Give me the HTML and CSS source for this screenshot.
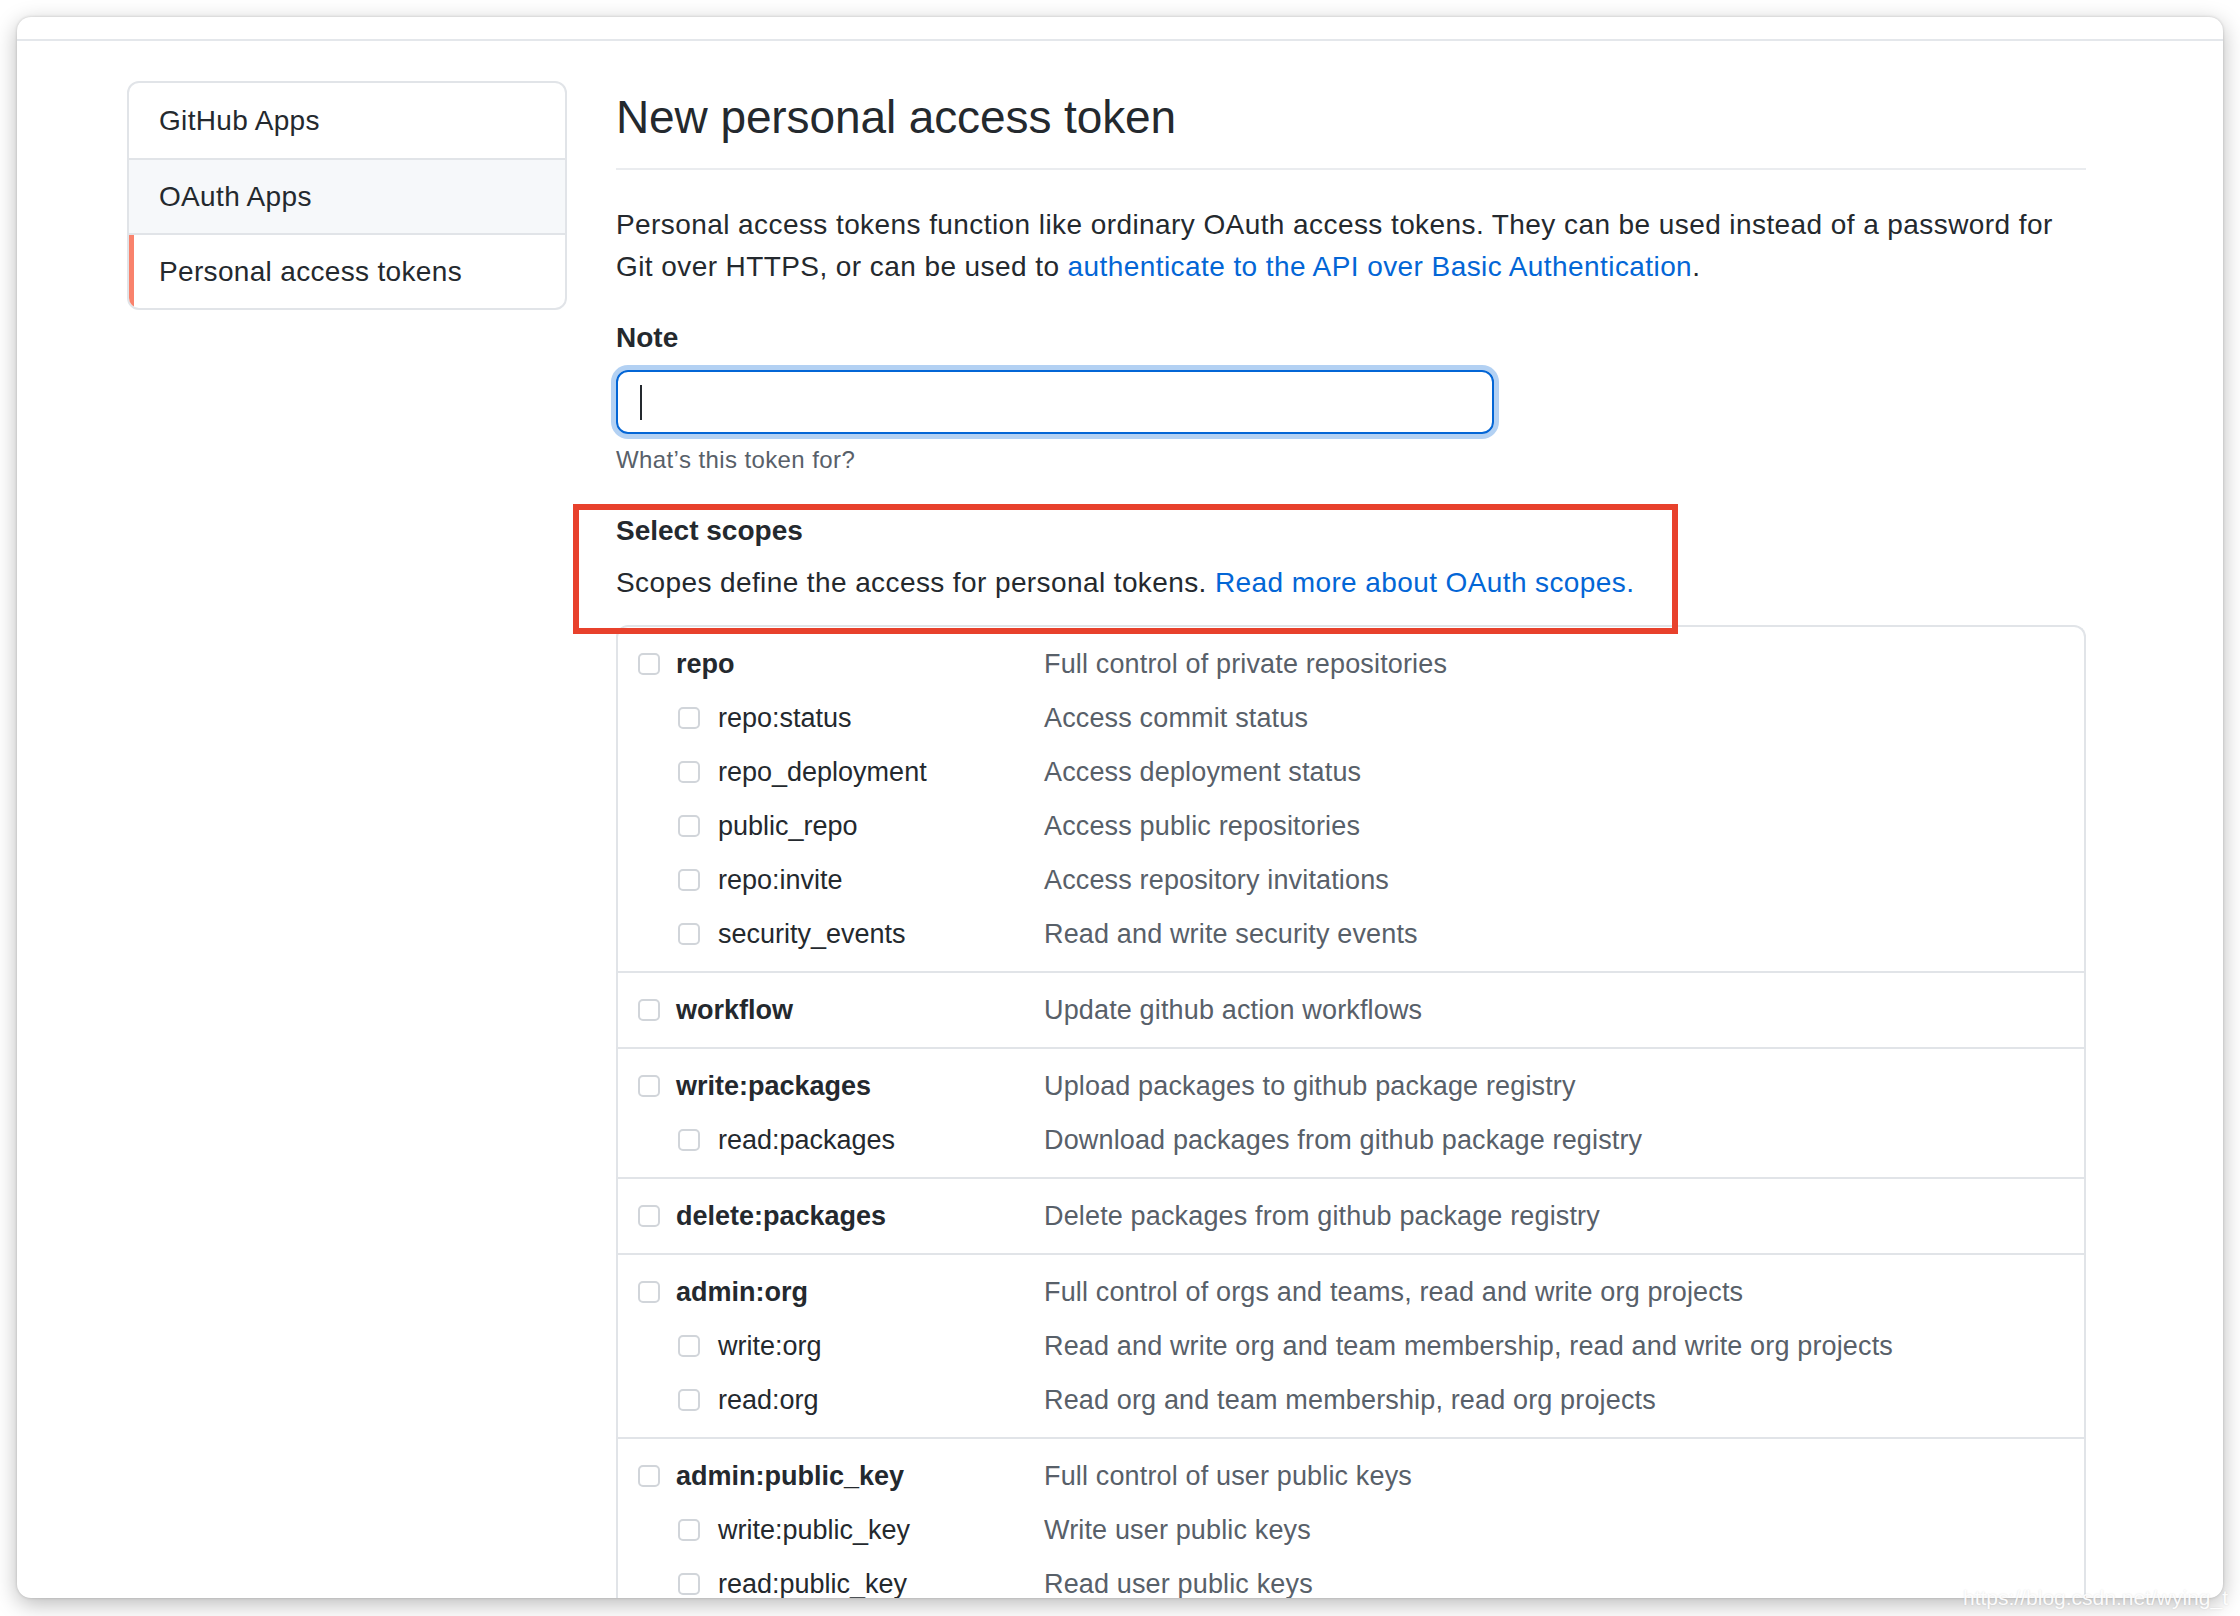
FILE: index.html
```html
<!DOCTYPE html>
<html lang="en">
<head>
<meta charset="utf-8">
<title>New personal access token</title>
<link rel="stylesheet" href="styles.css">
</head>
<body>
<div class="window">
  <div class="topbar"></div>
  <div class="layout">
    <nav class="menu">
      <a class="menu-item">GitHub Apps</a>
      <a class="menu-item hover">OAuth Apps</a>
      <a class="menu-item selected">Personal access tokens</a>
    </nav>
    <main class="main">
      <h2 class="subhead">New personal access token</h2>
      <p class="lead">Personal access tokens function like ordinary OAuth access tokens. They can be used instead of a password for Git over HTTPS, or can be used to <a class="link">authenticate to the API over Basic Authentication</a>.</p>
      <label class="label note-label">Note</label>
      <div class="input"><span class="caret"></span></div>
      <p class="hint">What’s this token for?</p>

      <div class="scopes-head">
        <h3 class="label">Select scopes</h3>
        <p class="scopes-desc">Scopes define the access for personal tokens. <a class="link">Read more about OAuth scopes.</a></p>
      </div>

      <div class="scopes">
        <div class="group">
          <div class="row"><div class="name top"><span class="cb"></span>repo</div><div class="desc">Full control of private repositories</div></div>
          <div class="row"><div class="name sub"><span class="cb"></span>repo:status</div><div class="desc">Access commit status</div></div>
          <div class="row"><div class="name sub"><span class="cb"></span>repo_deployment</div><div class="desc">Access deployment status</div></div>
          <div class="row"><div class="name sub"><span class="cb"></span>public_repo</div><div class="desc">Access public repositories</div></div>
          <div class="row"><div class="name sub"><span class="cb"></span>repo:invite</div><div class="desc">Access repository invitations</div></div>
          <div class="row"><div class="name sub"><span class="cb"></span>security_events</div><div class="desc">Read and write security events</div></div>
        </div>
        <div class="group">
          <div class="row"><div class="name top"><span class="cb"></span>workflow</div><div class="desc">Update github action workflows</div></div>
        </div>
        <div class="group">
          <div class="row"><div class="name top"><span class="cb"></span>write:packages</div><div class="desc">Upload packages to github package registry</div></div>
          <div class="row"><div class="name sub"><span class="cb"></span>read:packages</div><div class="desc">Download packages from github package registry</div></div>
        </div>
        <div class="group">
          <div class="row"><div class="name top"><span class="cb"></span>delete:packages</div><div class="desc">Delete packages from github package registry</div></div>
        </div>
        <div class="group">
          <div class="row"><div class="name top"><span class="cb"></span>admin:org</div><div class="desc">Full control of orgs and teams, read and write org projects</div></div>
          <div class="row"><div class="name sub"><span class="cb"></span>write:org</div><div class="desc">Read and write org and team membership, read and write org projects</div></div>
          <div class="row"><div class="name sub"><span class="cb"></span>read:org</div><div class="desc">Read org and team membership, read org projects</div></div>
        </div>
        <div class="group">
          <div class="row"><div class="name top"><span class="cb"></span>admin:public_key</div><div class="desc">Full control of user public keys</div></div>
          <div class="row"><div class="name sub"><span class="cb"></span>write:public_key</div><div class="desc">Write user public keys</div></div>
          <div class="row"><div class="name sub"><span class="cb"></span>read:public_key</div><div class="desc">Read user public keys</div></div>
        </div>
      </div>
    </main>
  </div>
</div>
<div class="watermark">https://blog.csdn.net/wying_t</div>
</body>
</html>
```

FILE: styles.css
```css
* { box-sizing: border-box; }

html, body {
  margin: 0;
  padding: 0;
  background: #ffffff;
}

body {
  width: 2240px;
  height: 1616px;
  overflow: hidden;
  position: relative;
  font-family: "Liberation Sans", Arial, sans-serif;
  color: #24292e;
  font-size: 28px;
}

.window {
  margin: 17px 0 0 17px;
  width: 2206px;
  height: 1581px;
  background: #fff;
  border-radius: 14px;
  overflow: hidden;
  box-shadow: 0 6px 22px rgba(0, 0, 0, 0.28), 0 0 3px rgba(0, 0, 0, 0.18);
}

.topbar {
  height: 24px;
  border-bottom: 2px solid #e4e7eb;
}

.layout {
  display: flex;
  align-items: flex-start;
  gap: 49px;
  padding: 40px 0 0 110px;
}

/* sidebar menu */
.menu {
  width: 440px;
  flex: none;
  border: 2px solid #e1e4e8;
  border-radius: 12px;
  overflow: hidden;
  display: flex;
  flex-direction: column;
}

.menu-item {
  display: flex;
  align-items: center;
  height: 75px;
  padding-left: 30px;
  color: #24292e;
  position: relative;
  line-height: 1;
  letter-spacing: 0.33px;
}

.menu-item + .menu-item {
  border-top: 2px solid #e1e4e8;
}

.menu-item.hover {
  background: #f6f8fa;
}

.menu-item.selected::before {
  content: "";
  position: absolute;
  left: 0;
  top: 0;
  bottom: 0;
  width: 5px;
  background: #f9826c;
}

/* main column */
.main {
  width: 1470px;
  flex: none;
}

.subhead {
  margin: 8px 0 0;
  font-size: 46px;
  font-weight: 400;
  line-height: 56px;
  padding-bottom: 23px;
  border-bottom: 2px solid #eaecef;
  letter-spacing: -0.1px;
}

.lead {
  margin: 34px 0 0;
  line-height: 42px;
  letter-spacing: 0.42px;
}

.link {
  color: #0366d6;
  text-decoration: none;
}

.label {
  display: block;
  margin: 32px 0 0;
  font-size: 28px;
  font-weight: 700;
  line-height: 42px;
}

.note-label {
  margin-top: 29px;
}

.input {
  margin-top: 11px;
  width: 878px;
  height: 64px;
  border: 2px solid #0366d6;
  border-radius: 12px;
  box-shadow: 0 0 0 5px rgba(3, 102, 214, 0.3);
  display: flex;
  align-items: center;
  padding-left: 22px;
}

.caret {
  width: 2px;
  height: 35px;
  background: #24292e;
}

.hint {
  margin: 8px 0 0;
  font-size: 24px;
  line-height: 36px;
  color: #586069;
  letter-spacing: 0.4px;
}

.scopes-head {
  position: relative;
}

.scopes-head::after {
  content: "";
  position: absolute;
  left: -43px;
  top: -6px;
  width: 1093px;
  height: 118px;
  border: 6px solid #e8412c;
  z-index: 3;
}

.scopes-desc {
  margin: 10px 0 0;
  line-height: 42px;
  letter-spacing: 0.4px;
}

/* scopes list */
.scopes {
  margin-top: 21px;
  border: 2px solid #e1e4e8;
  border-bottom: none;
  border-radius: 12px 12px 0 0;
  font-size: 27px;
}

.group {
  padding: 10px 0 10px;
}

.group + .group {
  border-top: 2px solid #e1e4e8;
}

.row {
  display: grid;
  grid-template-columns: 406px 1fr;
  height: 54px;
  align-items: center;
  padding-left: 20px;
}

.name {
  display: flex;
  align-items: center;
  gap: 16px;
  color: #24292e;
}

.name.top {
  font-weight: 700;
}

.name.sub {
  padding-left: 40px;
  gap: 18px;
}

.cb {
  width: 22px;
  height: 22px;
  flex: none;
  border: 2px solid #d1d5da;
  border-radius: 5px;
  background: #fff;
}

.desc {
  color: #586069;
  letter-spacing: 0.15px;
}

.watermark {
  position: absolute;
  right: 12px;
  bottom: 6px;
  font-size: 21px;
  color: rgba(255, 255, 255, 0.95);
  text-shadow: 0 0 2px rgba(0, 0, 0, 0.12);
}
```
